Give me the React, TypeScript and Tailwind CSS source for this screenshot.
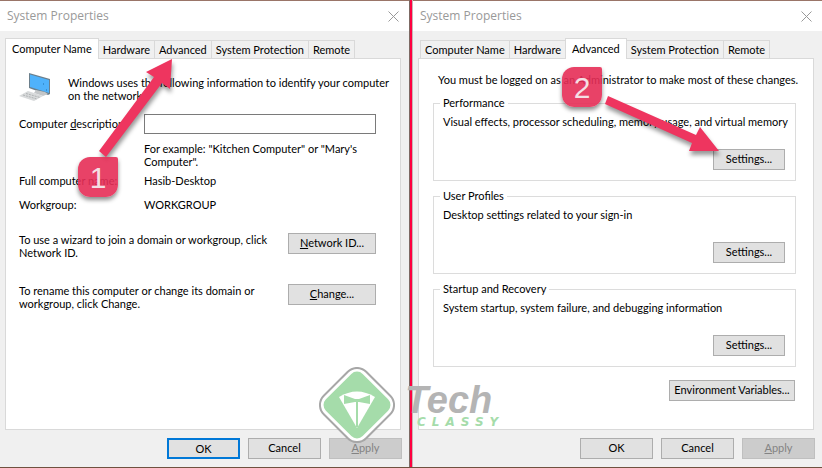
import React, { useId } from "react";
import { clsx } from "clsx";

const TABS = ["Computer Name", "Hardware", "Advanced", "System Protection", "Remote"];

interface DialogProps {
  activeTab: string;
  defaultOk?: boolean;
  children: React.ReactNode;
}

interface PushButtonProps {
  className?: string;
  disabled?: boolean;
  primary?: boolean;
  children: React.ReactNode;
}

function PushButton({ className, disabled, primary, children }: PushButtonProps) {
  return (
    <button
      type="button"
      disabled={disabled}
      className={clsx(
        "h-[21px] shrink-0 whitespace-nowrap text-center",
        primary && "border-2 border-[#0078d7] bg-[#e1e1e1] leading-4",
        disabled && "border border-[#bfbfbf] bg-[#cccccc] text-[#838383]",
        !primary && !disabled && "border border-[#adadad] bg-[#e1e1e1]",
        className
      )}
    >
      {children}
    </button>
  );
}

function CloseIcon() {
  return (
    <svg width="11" height="11" viewBox="0 0 11 11" fill="none" stroke="#999999">
      <path d="M0.5 0.5 L10.5 10.5 M10.5 0.5 L0.5 10.5" />
    </svg>
  );
}

function Dialog({ activeTab, defaultOk, children }: DialogProps) {
  const activeIndex = TABS.indexOf(activeTab);

  return (
    <section className="flex min-w-0 flex-1 flex-col border-t border-[#9a7568] bg-[#f0f0f0]">
      <header className="flex h-[30px] items-center justify-between bg-white pr-[10px] pl-[7px]">
        <h1 className="font-['Open_Sans',sans-serif] text-[12px] text-[#999999]">System Properties</h1>
        <button type="button" aria-label="Close">
          <CloseIcon />
        </button>
      </header>

      <div className="flex flex-1 flex-col px-[5px] pt-[7px] pr-2">
        <div role="tablist" className={clsx("flex h-5 items-end", activeIndex > 0 && "pl-[2px]")}>
          {TABS.map((tab, i) => (
            <button
              key={tab}
              type="button"
              role="tab"
              aria-selected={i === activeIndex}
              className={clsx(
                "border-t border-r border-[#d9d9d9] leading-4 whitespace-nowrap",
                i === activeIndex
                  ? "z-10 -mb-px h-[21px] border-l bg-white px-[6px] pb-px"
                  : "h-[18px] bg-[#f0f0f0] px-1",
                i === 0 && i !== activeIndex && "border-l",
                i === activeIndex - 1 && "border-r-0"
              )}
            >
              {tab}
            </button>
          ))}
        </div>
        <div role="tabpanel" className="flex h-[372px] flex-col border border-[#d9d9d9] bg-white">
          {children}
        </div>
        <footer className="-mr-px flex justify-end gap-2 pt-2 pb-2">
          <PushButton className="w-[73px]" primary={defaultOk}>
            OK
          </PushButton>
          <PushButton className="w-[73px]">Cancel</PushButton>
          <PushButton className="w-[73px]" disabled>
            <u>A</u>pply
          </PushButton>
        </footer>
      </div>
    </section>
  );
}

function ComputerIcon() {
  return (
    <svg width="34" height="30" viewBox="0 0 34 30" className="shrink-0">
      <path d="M10 0 L31 6 V21 L29 22 L10 15 Z" fill="#6b7f8c" />
      <path d="M11 1.500 L30 7 V20 L11 14 Z" fill="#4fb2fb" />
      <path d="M17 17 L26 19 L29 21 L24 23 L15 20 Z" fill="#c3c6c8" />
      <path d="M0 23 L9 18 L24 23 L15 28 Z" fill="#d8dadb" />
      <path d="M4 22 L18 26 M7 20.500 L21 24.500" stroke="#b0b3b5" strokeDasharray="2 1" />
      <path d="M24 11 h1 M27 17 h1" stroke="#2471a8" />
    </svg>
  );
}

function ComputerNamePanel() {
  const descriptionId = useId();

  return (
    <div className="flex flex-col pt-[14px] pr-6 pl-[13px]">
      <div className="-mr-5 flex gap-[15px]">
        <ComputerIcon />
        <p className="pt-[3px] leading-[13px]">
          Windows uses the following information to identify your computer on the network.
        </p>
      </div>

      <div className="mt-[11px] grid grid-cols-[125px_1fr] items-center">
        <label htmlFor={descriptionId} className="whitespace-nowrap">
          Computer <u>d</u>escription:
        </label>
        <input id={descriptionId} type="text" className="h-5 border border-[#7a7a7a] bg-white px-1" />
        <p className="col-start-2 max-w-[225px] pt-2 leading-[13px]">
          For example: "Kitchen Computer" or "Mary's Computer".
        </p>
      </div>

      <dl className="mt-[5px] grid grid-cols-[125px_1fr] gap-y-2 leading-4">
        <dt>Full computer name:</dt>
        <dd>Hasib-Desktop</dd>
        <dt>Workgroup:</dt>
        <dd>WORKGROUP</dd>
      </dl>

      <div className="mt-5 flex justify-between">
        <p className="max-w-[260px] leading-[13px]">
          To use a wizard to join a domain or workgroup, click Network ID.
        </p>
        <PushButton className="w-[88px]">
          <u>N</u>etwork ID...
        </PushButton>
      </div>
      <div className="mt-[25px] flex justify-between">
        <p className="max-w-[260px] leading-[13px]">
          To rename this computer or change its domain or workgroup, click Change.
        </p>
        <PushButton className="w-[88px]">
          <u>C</u>hange...
        </PushButton>
      </div>
    </div>
  );
}

interface SettingsGroupProps {
  title: string;
  description: string;
}

function SettingsGroup({ title, description }: SettingsGroupProps) {
  return (
    <fieldset className="flex h-[86px] min-w-0 flex-col border border-[#dcdcdc] pr-[10px] pb-[10px] pl-[9px]">
      <legend className="-ml-[3px] px-[3px] leading-4">{title}</legend>
      <p className="pt-[3px] whitespace-nowrap leading-4">{description}</p>
      <div className="mt-[19px] flex justify-end">
        <PushButton className="w-[72px]">Settings...</PushButton>
      </div>
    </fieldset>
  );
}

function AdvancedPanel() {
  return (
    <div className="flex flex-col pt-[13px] pr-[17px] pl-[14px]">
      <p className="pl-[5px] whitespace-nowrap leading-4">
        You must be logged on as an Administrator to make most of these changes.
      </p>
      <div className="flex flex-col gap-[7px] pt-[7px]">
        <SettingsGroup
          title="Performance"
          description="Visual effects, processor scheduling, memory usage, and virtual memory"
        />
        <SettingsGroup title="User Profiles" description="Desktop settings related to your sign-in" />
        <SettingsGroup
          title="Startup and Recovery"
          description="System startup, system failure, and debugging information"
        />
      </div>
      <div className="mt-[13px] mr-px flex justify-end">
        <PushButton className="w-[126px]">Environment Variables...</PushButton>
      </div>
    </div>
  );
}

// Numbered callouts and arrows drawn over both dialogs
function Annotations() {
  return (
    <div className="pointer-events-none absolute inset-0 z-20">
      <svg
        width="822"
        height="468"
        viewBox="0 0 822 468"
        className="absolute top-0 left-0 drop-shadow-[1px_4px_2px_rgba(0,0,0,0.4)]"
      >
        <path d="M99 151 L106 157 L162 83 L170 89 L172 59 L146 72 L154 77 Z" fill="#ee355f" />
        <path d="M608 96 L605 104 L692 143 L689 151 L719 151 L700 127 L696 135 Z" fill="#ee355f" />
      </svg>
      <span className="absolute top-[157px] left-[78px] flex size-10 items-center justify-center rounded-[12px] rounded-tr-[2px] bg-[#e62e57]/90 font-['Liberation_Sans',sans-serif] text-[30px] text-[#f4dfe4] shadow-[0_3px_4px_rgba(0,0,0,0.45)]">
        1
      </span>
      <span className="absolute top-[67px] left-[562px] flex size-10 items-center justify-center rounded-[12px] rounded-tr-[2px] bg-[#e62e57]/90 font-['Liberation_Sans',sans-serif] text-[30px] text-[#f4dfe4] shadow-[0_3px_4px_rgba(0,0,0,0.45)]">
        2
      </span>
    </div>
  );
}

function Watermark() {
  return (
    <div className="pointer-events-none absolute top-[367px] left-[319px] z-20 flex">
      <svg width="76" height="76" viewBox="0 0 76 76">
        <rect x="8" y="8" width="60" height="60" rx="13" transform="rotate(45 38 38)" fill="#ffffff" stroke="#a7a7a7" strokeWidth="2" />
        <rect x="12" y="12" width="52" height="52" rx="8" transform="rotate(45 38 38)" fill="#a5dcaa" />
        <path d="M20 30 Q38 19 56 30 L38 61 Z" fill="#ffffff" />
        <path d="M25 28 L36 32 H40 L51 28 V37 L40 35 H36 L25 37 Z" fill="#a5dcaa" />
        <path d="M38 34 V60" stroke="#a5dcaa" strokeWidth="2" />
      </svg>
      <div className="pt-[17px] pl-[10px] font-bold italic">
        <p className="font-['Liberation_Sans',sans-serif] text-[38px] leading-8 text-[#b4b4b4]">Tech</p>
        <p className="pl-3 font-['DejaVu_Sans',sans-serif] text-[12px] leading-3 tracking-[6px] text-[#a5dcaa]">
          CLASSY
        </p>
      </div>
    </div>
  );
}

export default function App() {
  return (
    <main className="relative flex overflow-hidden border-b border-[#70513f] font-[Lato,sans-serif] text-[11px] text-black">
      <Dialog activeTab="Computer Name" defaultOk>
        <ComputerNamePanel />
      </Dialog>
      <div className="w-1 shrink-0 border-r border-l border-r-[#c9b5b5] border-l-[#7d6a64] bg-[#ff0040]" />
      <Dialog activeTab="Advanced">
        <AdvancedPanel />
      </Dialog>
      <Watermark />
      <Annotations />
    </main>
  );
}
